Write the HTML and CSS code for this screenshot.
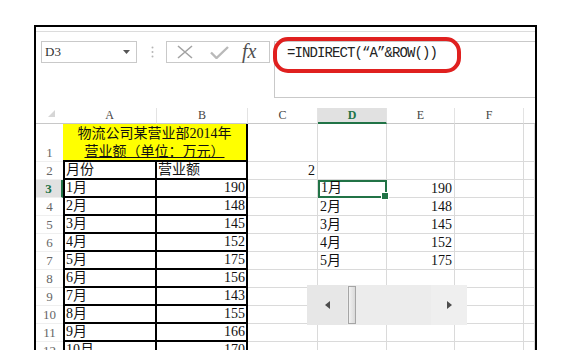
FILE: index.html
```html
<!DOCTYPE html>
<html lang="zh">
<head>
<meta charset="utf-8">
<title>INDIRECT</title>
<link rel="stylesheet" href="styles.css">
</head>
<body>
<div class="frame">
  <div class="topline"></div>
  <div class="fbar">
    <div class="namebox"><span>D3</span>
      <svg class="caret" width="7" height="4" viewBox="0 0 7 4"><path d="M0 0H7L3.5 4Z" fill="#555"/></svg>
    </div>
    <svg class="sep" width="3" height="12" viewBox="0 0 3 12"><circle cx="1.5" cy="1.5" r="1" fill="#b5b5b5"/><circle cx="1.5" cy="6" r="1" fill="#b5b5b5"/><circle cx="1.5" cy="10.5" r="1" fill="#b5b5b5"/></svg>
    <div class="btns">
      <svg class="ico-x" width="16" height="14" viewBox="0 0 16 14"><path d="M1 1L15 13M15 1L1 13" stroke="#a3a3a3" stroke-width="1.6" fill="none"/></svg>
      <svg class="ico-ok" width="19" height="13" viewBox="0 0 19 13"><path d="M1 6.5L6.5 12L18 1" stroke="#b9b9b9" stroke-width="2.4" fill="none"/></svg>
      <span class="fx">fx</span>
    </div>
    <div class="fbox">=INDIRECT(“A”&amp;ROW())</div>
  </div>

  <div class="sheet">
    <div class="corner"><svg width="7" height="7" viewBox="0 0 7 7"><path d="M7 0V7H0Z" fill="#d6d6d6"/></svg></div>
    <div class="ch">A</div><div class="ch">B</div><div class="ch">C</div><div class="ch on">D</div><div class="ch">E</div><div class="ch">F</div><div class="ch last"></div>

    <div class="rh">1</div>
    <div class="title"><span>物流公司某营业部2014年</span><span class="ul">营业额（单位：万元）</span></div>
    <div class="g"></div><div class="g"></div><div class="g"></div><div class="g"></div><div class="g"></div>

    <div class="rh">2</div>
    <div class="ta">月份</div><div class="tb l">营业额</div>
    <div class="g r">2</div><div class="g"></div><div class="g"></div><div class="g"></div><div class="g"></div>

    <div class="rh on">3</div>
    <div class="ta">1月</div><div class="tb">190</div>
    <div class="g"></div><div class="g sel">1月</div><div class="g r">190</div><div class="g"></div><div class="g"></div>

    <div class="rh">4</div>
    <div class="ta">2月</div><div class="tb">148</div>
    <div class="g"></div><div class="g">2月</div><div class="g r">148</div><div class="g"></div><div class="g"></div>

    <div class="rh">5</div>
    <div class="ta">3月</div><div class="tb">145</div>
    <div class="g"></div><div class="g">3月</div><div class="g r">145</div><div class="g"></div><div class="g"></div>

    <div class="rh">6</div>
    <div class="ta">4月</div><div class="tb">152</div>
    <div class="g"></div><div class="g">4月</div><div class="g r">152</div><div class="g"></div><div class="g"></div>

    <div class="rh">7</div>
    <div class="ta">5月</div><div class="tb">175</div>
    <div class="g"></div><div class="g">5月</div><div class="g r">175</div><div class="g"></div><div class="g"></div>

    <div class="rh">8</div>
    <div class="ta">6月</div><div class="tb">156</div>
    <div class="g"></div><div class="g"></div><div class="g"></div><div class="g"></div><div class="g"></div>

    <div class="rh">9</div>
    <div class="ta">7月</div><div class="tb">143</div>
    <div class="g"></div><div class="g"></div><div class="g"></div><div class="g"></div><div class="g"></div>

    <div class="rh">10</div>
    <div class="ta">8月</div><div class="tb">155</div>
    <div class="g"></div><div class="g"></div><div class="g"></div><div class="g"></div><div class="g"></div>

    <div class="rh">11</div>
    <div class="ta">9月</div><div class="tb">166</div>
    <div class="g"></div><div class="g"></div><div class="g"></div><div class="g"></div><div class="g"></div>

    <div class="rh">12</div>
    <div class="ta">10月</div><div class="tb">170</div>
    <div class="g"></div><div class="g"></div><div class="g"></div><div class="g"></div><div class="g"></div>
  </div>

  <div class="scroll">
    <div class="sb-btn"><svg width="5" height="8" viewBox="0 0 5 8"><path d="M5 0V8L0 4Z" fill="#4d4d4d"/></svg></div>
    <div class="thumb"></div>
    <div class="sb-track"></div>
    <div class="sb-btn right"><svg width="5" height="8" viewBox="0 0 5 8"><path d="M0 0V8L5 4Z" fill="#4d4d4d"/></svg></div>
  </div>

  <div class="mark"></div>
</div>
</body>
</html>
```
FILE: styles.css
```css
* { box-sizing: border-box; margin: 0; padding: 0; }
html, body { width: 568px; height: 350px; overflow: hidden; background: #fff; }
body { font-family: "Liberation Serif", "Noto Sans CJK SC", serif; color: #111; }

.frame {
  position: relative;
  margin: 25px 0 0 34px;
  width: 503px;
  height: 340px;
  border: 2px solid #000;
  border-bottom: none;
  overflow: hidden;
}
.topline { height: 5px; border-bottom: 1px solid #dcdcdc; }

.fbar {
  display: flex;
  align-items: flex-start;
  height: 76px;
  padding: 9px 0 0 5px;
}
.namebox {
  width: 96px;
  height: 22px;
  border: 1px solid #c9c9c9;
  display: flex;
  align-items: center;
  justify-content: space-between;
  padding: 0 6px 0 3px;
  font-size: 13px;
  color: #333;
}
.sep { margin: 5px 0 0 14px; }
.btns {
  margin-left: 12px;
  width: 104px;
  height: 22px;
  border: 1px solid #c9c9c9;
  display: flex;
  align-items: center;
  padding-left: 10px;
}
.ico-x { margin-right: 17px; }
.ico-ok { margin-right: 13px; margin-top: 1px; }
.fx {
  font-family: "Liberation Serif", serif;
  font-style: italic;
  font-size: 20px;
  color: #505050;
  line-height: 20px;
  margin-top: -2px;
}
.fbox {
  margin-left: 4px;
  flex: 1;
  height: 57px;
  border: 1px solid #c9c9c9;
  border-right: none;
  padding: 1px 0 0 12px;
  font-family: "Liberation Mono", monospace;
  font-size: 14px;
  line-height: 20px;
  letter-spacing: -0.9px;
  color: #222;
}

.sheet {
  display: grid;
  grid-template-columns: 27px 94px 91px 70px 69px 68px 69px 11px;
  grid-template-rows: 16px 38px repeat(11, 18px);
}
.corner {
  border-bottom: 1px solid #c8c8c8;
  display: flex;
  align-items: flex-end;
  justify-content: flex-end;
  padding: 0 8px 6px 0;
}
.ch {
  border-right: 1px solid #e3e3e3;
  border-bottom: 1px solid #c8c8c8;
  text-align: center;
  font-size: 12px;
  line-height: 15px;
  color: #444;
}
.ch.last { border-right: none; }
.ch.on {
  background: #e1e1e1;
  color: #217346;
  font-weight: bold;
  border-bottom: 2px solid #217346;
}
.rh {
  display: flex;
  align-items: flex-end;
  justify-content: center;
  font-size: 13px;
  line-height: 16px;
  color: #666;
  border-bottom: 1px solid #efefef;
}
.rh.on {
  background: #e1e1e1;
  color: #217346;
  font-weight: bold;
  border-right: 2px solid #217346;
}
.title {
  grid-column: span 2;
  background: #ffff00;
  border-right: 2px solid #000;
  border-bottom: 2px solid #000;
  display: flex;
  flex-direction: column;
  justify-content: center;
  align-items: center;
  font-size: 14px;
  line-height: 18px;
  padding-top: 1px;
}
.ul { text-decoration: underline; }

.g, .ta, .tb {
  display: flex;
  align-items: flex-end;
  font-size: 14px;
  line-height: 17px;
  white-space: nowrap;
  overflow: hidden;
}
.g {
  border-right: 1px solid #dadada;
  border-bottom: 1px solid #dadada;
  padding: 0 2px;
}
.r { justify-content: flex-end; }
.ta {
  border-left: 2px solid #000;
  border-right: 2px solid #000;
  border-bottom: 2px solid #000;
  padding-left: 1px;
}
.tb {
  border-right: 2px solid #000;
  border-bottom: 2px solid #000;
  justify-content: flex-end;
  padding-right: 1px;
}
.tb.l { justify-content: flex-start; padding-left: 1px; }
.g.sel {
  position: relative;
  z-index: 2;
  overflow: visible;
  border: 2px solid #217346;
  padding-left: 1px;
}
.g.sel::after {
  content: "";
  position: absolute;
  right: -4px;
  bottom: -4px;
  width: 6px;
  height: 6px;
  background: #217346;
  border: 1px solid #fff;
}

.scroll {
  position: absolute;
  left: 271px;
  top: 258px;
  width: 160px;
  height: 40px;
  background: #ececec;
  display: flex;
  align-items: center;
  z-index: 3;
}
.sb-btn {
  width: 40px;
  height: 100%;
  background: #e7e7e7;
  display: flex;
  align-items: center;
  justify-content: center;
}
.sb-btn.right { width: 36px; background: #efefef; }
.thumb {
  width: 8px;
  height: 38px;
  margin-left: 1px;
  border: 1px solid #a5a5a5;
  background: linear-gradient(90deg, #f2f2f2, #d9d9d9);
}
.sb-track { flex: 1; }

.mark {
  position: absolute;
  left: 237px;
  top: 10px;
  width: 188px;
  height: 36px;
  border: 4px solid #e0201f;
  border-radius: 15px;
  z-index: 4;
}
```
